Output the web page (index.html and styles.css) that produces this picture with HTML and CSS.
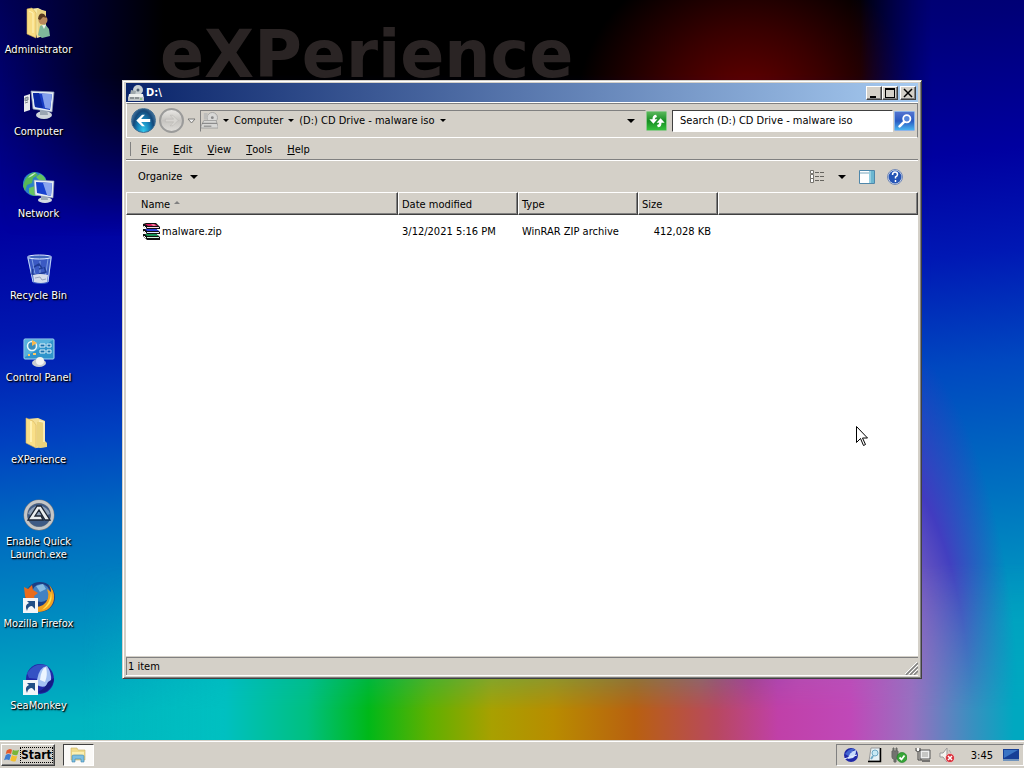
FILE: index.html
```html
<!DOCTYPE html>
<html lang="en">
<head>
<meta charset="utf-8">
<title>Desktop</title>
<link rel="stylesheet" href="styles.css">
</head>
<body>
<main class="desktop">
  <div class="wallpaper" aria-hidden="true">
    <div class="glow-top"></div>
    <div class="glow-right"></div>
    <div class="glow-violet"></div>
    <div class="glow-bottom"></div>
    <p class="watermark">eXPerience</p>
  </div>

  <nav class="shortcuts" aria-label="Desktop icons">
    <a class="shortcut" href="#admin">
      <svg viewBox="0 0 32 32"><path d="M6 2l9-1 8 4v23l-9 3z" fill="#f6e9a4"/><path d="M14 2l9 2v21l-8 5z" fill="#e9d384"/><path d="M15 28l2-9 5-2 4 5 1 7-8 2z" fill="#7eb89a"/><path d="M19 18l2 4 2-4z" fill="#edf2e8"/><circle cx="20" cy="13" r="4.500" fill="#b98a5c"/><path d="M15 12q1-7 6-5l3 4-4-1-3 3z" fill="#57391f"/><path d="M4 2l5-1 4 5v25L4 27z" fill="#f8dd83" stroke="#d0ad55" stroke-width=".6"/><path d="M6 4l4 2v20" fill="none" stroke="#fff3ba"/></svg>
      <span>Administrator</span></a>
    <a class="shortcut" href="#computer">
      <svg viewBox="0 0 32 32"><path d="M1 7l6-2v16l-6 2z" fill="#e8eaec"/><path d="M2 9l3-1v3l-3 1zm0 5l3-1" stroke="#7d858c" fill="#aab3ba"/><ellipse cx="21" cy="26" rx="8" ry="4" fill="#cfd5db"/><path d="M17 21h7l1 5h-8z" fill="#9aa5b2"/><path d="M8 2l23 1-2 20-19-3z" fill="#e6edf5" stroke="#8697ad" stroke-width=".7"/><path d="M10 4l19 1-2 16-15-3z" fill="#173bc2"/><path d="M19 5l10 0-2 15-5-1z" fill="#839fec"/><path d="M10 4l6 0 4 15-8-1z" fill="#0926a0"/></svg>
      <span>Computer</span></a>
    <a class="shortcut" href="#network">
      <svg viewBox="0 0 32 32"><circle cx="12" cy="13" r="12" fill="#2a82c9"/><path d="M2 9Q6 2 12 1l3 3-5 3-1 5-5 2-2 6-2-5z" fill="#57b856"/><path d="M17 3q5 2 6 7l-7-1-3-3zM6 17l6-2 4 5-2 5q-5 0-8-3z" fill="#65c461"/><path d="M5 7q4-5 8-5-3 3-8 5z" fill="#c7efd0"/><ellipse cx="22" cy="29" rx="7" ry="3" fill="#d5dce2"/><path d="M18 23h6l1 6h-7z" fill="#9dabb9"/><path d="M11 9l20 1-1 17-18-3z" fill="#e8eef5" stroke="#8799ac" stroke-width=".6"/><path d="M13 11l16 1-1 13-14-3z" fill="#1741cf"/><path d="M20 12l9 0-1 13-4-1z" fill="#89a5ef"/></svg>
      <span>Network</span></a>
    <a class="shortcut" href="#bin">
      <svg viewBox="0 0 32 32"><path d="M4 4h25l-4 26q-6 2-15 0z" fill="#4a6fcb" fill-opacity=".8"/><path d="M9 6l4 20M17 8v18M25 6l-3 20" stroke="#7f9fe4"/><path d="M5 5l5 24M28 5l-3 24" stroke="#c2d5fb"/><ellipse cx="16.500" cy="4" rx="12" ry="2" fill="#3f65bd" stroke="#e1ebff"/><path d="M11 14l5-3 3 4-3 1m-6 0l-1 5 5 1m2-1l7-2-2-5" fill="none" stroke="#203c96" stroke-width="1.500"/><path d="M10 22q7-2 15 0l-1 7q-6 2-13 0z" fill="#d5dcec"/><path d="M12 25l5-1 2 3 4-1" fill="none" stroke="#98a4bf"/></svg>
      <span>Recycle Bin</span></a>
    <a class="shortcut" href="#control">
      <svg viewBox="0 0 32 32"><rect x="1" y="4" width="30" height="20" rx="1" fill="#3194cb" stroke="#a6d9f4"/><path d="M2 5h28L2 22z" fill="#57b1dc"/><circle cx="9" cy="11" r="4.500" fill="#3a8fbc" stroke="#e9f5f8" stroke-width="1.500"/><path d="M9 11V5l5 3z" fill="#f8b84d"/><path d="M17 9h5v3h-5zm7 0h4v3h-4zm-7 6h5v3h-5zm7 0h4v3h-4z" fill="#196fad" stroke="#dcf3fb"/><path d="M5 20h2m3-1h3" stroke="#ffc760" stroke-width="2"/><ellipse cx="16" cy="28" rx="7" ry="4" fill="#cbced0"/><circle cx="17" cy="26" r="4" fill="#f4f4f2"/></svg>
      <span>Control Panel</span></a>
    <a class="shortcut" href="#experience">
      <svg viewBox="0 0 32 32"><path d="M4 2l11-1 7 3v26l-9 1z" fill="#f4df95"/><path d="M14 5l8-1v20l2 2v4l-7 1-3-2z" fill="#ead27c"/><path d="M3 1l7 3 3 4v23L3 26z" fill="#f9df88" stroke="#d6b45f" stroke-width=".6"/><path d="M8 4v21" stroke="#fff0af" stroke-width="2"/><path d="M16 4l5 1v20" fill="none" stroke="#fbf1c5" stroke-width="1.500"/></svg>
      <span>eXPerience</span></a>
    <a class="shortcut" href="#enable">
      <svg viewBox="0 0 32 32"><circle cx="16" cy="16" r="15.500" fill="#747a80"/><circle cx="16" cy="16" r="13.500" fill="none" stroke="#c4c6c8" stroke-width="3"/><circle cx="16" cy="16" r="11.500" fill="#3e5a85"/><path d="M5 15a11.500 11.500 0 0 1 22 0q-10 5-22 0z" fill="#8b9eb7"/><path d="M5 21L14 7h4l9 14h-5l-6-10-4 6h6l2 4z" fill="#e9edf0" stroke="#1c2533" stroke-width="1.300"/></svg>
      <span>Enable Quick Launch.exe</span></a>
    <a class="shortcut" href="#firefox">
      <svg viewBox="0 0 32 32"><circle cx="17" cy="16" r="15" fill="#1b3e84"/><circle cx="18" cy="12" r="9" fill="#4382c2"/><path d="M13 5l7-2 3 5-6 3z" fill="#87bbe1"/><path d="M25 3q7 6 6 15-2 12-15 13-8-1-12-7 9 4 16 0 8-6 4-16l4 3q0-5-3-8z" fill="#f2a11f"/><path d="M28 11q3 12-9 18 9-8 9-18z" fill="#ffe451"/><path d="M2 15L1 6l4 2 4-4 1 5 5 3-4 3 1 4H3z" fill="#e96c1c"/><path d="M0 17h15v15H0z" fill="#f3f5f8"/><path d="M4 30q-3-6 2-8L4 20h8v8l-3-3q-4 0-5 5z" fill="#214e86"/></svg>
      <span>Mozilla Firefox</span></a>
    <a class="shortcut" href="#seamonkey">
      <svg viewBox="0 0 32 32"><ellipse cx="17" cy="16" rx="14" ry="15" fill="#2028a8"/><path d="M4 10Q13-2 25 3q-9 2-10 13l-9-1z" fill="#3452c4"/><path d="M14 17Q16 4 24 3q5 7 4 15-6 9-14 4z" fill="#a3c1f3"/><path d="M17 17q1-11 6-13 2 8-1 15z" fill="#edf5ff"/><path d="M25 19l6-4q0 7-7 13-5 3-9 1 7-3 10-10z" fill="#141d84"/><path d="M0 17h15v15H0z" fill="#f3f5f8"/><path d="M4 30q-3-6 2-8L4 20h8v8l-3-3q-4 0-5 5z" fill="#214e86"/></svg>
      <span>SeaMonkey</span></a>
  </nav>

  <section class="window" aria-label="D:\">
    <header class="titlebar">
      <svg class="title-icon" viewBox="0 0 16 16"><circle cx="10" cy="5" r="5" fill="#c9d0d2"/><circle cx="10" cy="5" r="1.500" fill="#536170"/><path d="M3 5l5 1-1 4H2z" fill="#9fa8ac"/><path d="M1 9h14l1 5H0z" fill="#edf0ee"/><path d="M0 12h16v4H0z" fill="#bfc4c5"/><path d="M2 13h4m1 0h4" stroke="#555d61"/><path d="M12 14h2" stroke="#61bc52"/></svg>
      <h1>D:\</h1>
      <div class="caption-buttons">
        <button aria-label="Minimize"><svg viewBox="0 0 12 10"><path d="M2 8h6v2H2z"/></svg></button>
        <button aria-label="Maximize"><svg viewBox="0 0 12 10"><path d="M1 0h10v10H1zm1 2v7h8V2z" fill-rule="evenodd"/></svg></button>
        <button class="close" aria-label="Close"><svg viewBox="0 0 12 10"><path d="M2 1l8 8M10 1L2 9" stroke="#000" stroke-width="1.500"/></svg></button>
      </div>
    </header>

    <div class="navbar">
      <div class="travel">
        <button class="round back" aria-label="Back"><svg viewBox="0 0 24 24"><path d="M10.500 6l-6 6 6 6h3l-4-4.500H19v-3H9.500l4-4.500z" fill="#fff"/></svg></button>
        <button class="round forward" aria-label="Forward"><svg viewBox="0 0 24 24"><path d="M13.500 6l6 6-6 6h-3l4-4.500H5v-3h9.500l-4-4.500z" fill="#d7d5d1" stroke="#b9b7b3" stroke-width=".6"/></svg></button>
        <button class="recent" aria-label="Recent pages"><svg viewBox="0 0 9 6"><path d="M1 1h7L4.500 5z" fill="#eee" stroke="#7b7b78"/></svg></button>
      </div>
      <div class="address">
        <svg class="drive" viewBox="0 0 18 18"><circle cx="12" cy="6" r="5.500" fill="#d8d8d6" stroke="#a5a5a4"/><circle cx="12" cy="6" r="1.500" fill="#888"/><path d="M3 1h4v7H3z" fill="#bdbdbb"/><path d="M3 9h13l2 6v2H0v-2z" fill="#d7d7d5" stroke="#a3a3a1"/><path d="M1 12h16M3 15h8" stroke="#777"/></svg>
        <button class="crumb-arrow" aria-label="Locations"><i class="tri"></i></button>
        <a href="#computer">Computer</a>
        <button class="crumb-arrow" aria-label="Computer contents"><i class="tri"></i></button>
        <a href="#drive">(D:) CD Drive - malware iso</a>
        <button class="crumb-arrow" aria-label="Drive contents"><i class="tri"></i></button>
        <button class="history" aria-label="Previous locations"><i class="tri wide"></i></button>
      </div>
      <button class="tool refresh" aria-label="Refresh"><svg viewBox="0 0 20 20"><path d="M9 3Q5 3 5 8H1.500L6 13l4.500-5H7.500q0-2 2.500-2.500zM11 17q4 0 4-5h3.500L14 7l-4.500 5h3q0 2-2.500 2.500z" fill="#fff"/></svg></button>
      <input class="search" type="search" aria-label="Search" placeholder="Search (D:) CD Drive - malware iso">
      <button class="tool find" aria-label="Find"><svg viewBox="0 0 20 20"><circle cx="12" cy="7.500" r="4" fill="#5687dc" stroke="#fff" stroke-width="2"/><path d="M9 11l-5 5" stroke="#fff" stroke-width="3" stroke-linecap="round"/></svg></button>
    </div>

    <nav class="menubar" aria-label="Menu">
      <button><u>F</u>ile</button><button><u>E</u>dit</button><button><u>V</u>iew</button><button><u>T</u>ools</button><button><u>H</u>elp</button>
    </nav>

    <div class="commandbar">
      <button class="organize">Organize <i class="tri wide"></i></button>
      <button class="view-mode" aria-label="Views"><svg viewBox="0 0 16 13"><path d="M1.500.500h3v3h-3zm0 4h3v4h-3zm0 4h3v4h-3z" fill="#fff" stroke="#77756f"/><path d="M6 2.500h4m1 0h4M6 6.500h4m1 0h4M6 10.500h4m1 0h4" stroke="#66645f"/></svg></button>
      <button class="view-more" aria-label="More views"><i class="tri wide"></i></button>
      <button class="pane" aria-label="Preview pane"><svg viewBox="0 0 16 14"><path d="M.5.500h15v13H.500z" fill="#fff" stroke="#4f87aa"/><path d="M1 3h9" stroke="#76a5bd"/><path d="M10 1h5v12h-5z" fill="#6bb6d0"/><path d="M11 1v12" stroke="#c4e8f1"/></svg></button>
      <button class="help" aria-label="Help"><svg viewBox="0 0 16 16"><circle cx="8" cy="8" r="7.500" fill="#dce3f2" stroke="#7389b5"/><circle cx="8" cy="8" r="6.500" fill="#2554b5"/><path d="M5.500 6q0-3 2.500-3t2.500 2.500Q10.500 7 8.500 8v1.500M8.500 11v2" fill="none" stroke="#fff" stroke-width="1.500"/></svg></button>
    </div>

    <div class="files">
      <table>
        <colgroup><col class="c-name"><col class="c-date"><col class="c-type"><col class="c-size"><col></colgroup>
        <thead><tr><th>Name <i class="sort"></i></th><th>Date modified</th><th>Type</th><th>Size</th><td></td></tr></thead>
        <tbody><tr>
          <td><a class="file" href="#malware"><svg viewBox="0 0 17 17"><path d="M0 1l3-1h10l4 4v2H4L0 3z" fill="#111"/><path d="M2 1h10l3 2H5z" fill="#d0185c"/><path d="M4 4h12v1H4z" fill="#ffd9e4"/><path d="M0 6h13l4 3v2H4L0 8z" fill="#111"/><path d="M2 6h11l3 2H4z" fill="#263fd8"/><path d="M4 9h12v1H4z" fill="#e0e9ff"/><path d="M0 11h13l4 3v3H4l-4-4z" fill="#111"/><path d="M2 11h11l3 2H4z" fill="#149352"/><path d="M4 14h12v1H4z" fill="#d3f5e0"/><path d="M1 3l2 2M1 8l2 2M1 13l2 2" stroke="#fff"/><path d="M8 1h3l2 2h-3z" fill="#ef7c95"/></svg>malware.zip</a></td>
          <td>3/12/2021 5:16 PM</td><td>WinRAR ZIP archive</td><td class="num">412,028 KB</td><td></td>
        </tr></tbody>
      </table>
    </div>

    <footer class="status"><span>1 item</span>
      <svg class="grip" viewBox="0 0 13 13"><path d="M1 13L13 1M5 13l8-8M9 13l4-4" stroke="#808080" stroke-width="1.500"/><path d="M0 12L12 0M4 12l9-9M8 12l5-5" stroke="#fff"/></svg>
    </footer>
  </section>

  <svg class="cursor" viewBox="0 0 12 20" aria-hidden="true"><path d="M.5.500v16l4-4 3 7 2-1-3-6.500h5z" fill="#fff" stroke="#000"/></svg>
</main>

<footer class="taskbar">
  <button class="start"><svg viewBox="0 0 18 16"><path d="M3 3q3-3 6-1L8 7Q5 5 2 7z" fill="#e45a2b"/><path d="M10 2q3 2 7 0l-2 6q-3 1-6-1z" fill="#78b53a"/><path d="M2 8q3-2 6 0l-2 6q-3-2-6 0z" fill="#3e7dcf"/><path d="M9 8q3 2 6 1l-2 6q-3 1-6-1z" fill="#f3bf2e"/></svg><span>Start</span></button>
  <button class="task" aria-label="Windows Explorer"><svg viewBox="0 0 18 16"><path d="M2 1h6l1 2h7v10H2z" fill="#f0dc8c" stroke="#c9b162" stroke-width=".6"/><path d="M3 5h12v6H3z" fill="#fbf0b2"/><path d="M3 15V9q0-1 2-1h8q2 0 2 1v6h-3v-3H6v3z" fill="#7cbfe2" stroke="#3d84ad" stroke-width=".6"/></svg></button>
  <div class="tray">
    <svg viewBox="0 0 16 16"><circle cx="8" cy="8" r="7" fill="#2029a8"/><path d="M2 7q4-6 10-5-5 3-5 8z" fill="#4264d1"/><path d="M5 12Q6 5 13 3q0 6-3 8z" fill="#c8dcfc"/><path d="M1 12l13-4" stroke="#e8efff"/></svg>
    <svg viewBox="0 0 16 16"><path d="M4 1h9v13H2z" fill="#e6f1f6" stroke="#999"/><path d="M13.500 1v13.500H1" stroke="#000" stroke-width="1.500" fill="none"/><circle cx="8" cy="6" r="3" fill="#c8e9f5" stroke="#6fa9c6"/><path d="M6 9l-2 3" stroke="#6fa9c6" stroke-width="2"/></svg>
    <svg viewBox="0 0 16 16"><path d="M2 1h1v3h2V1h1v3h1v6q0 2-2 2v3H3v-3q-2 0-2-2V4h1z" fill="#72736f" stroke="#656663"/><circle cx="11" cy="10.500" r="5" fill="#36a537" stroke="#177a22" stroke-width=".6"/><path d="M8.500 10.500l2 2 3-4" fill="none" stroke="#fff" stroke-width="1.800"/></svg>
    <svg viewBox="0 0 16 16"><path d="M5 3h10v9H5z" fill="#eee" stroke="#555"/><path d="M7 5h6v5H7z" fill="#c6c6c4"/><path d="M7 14h8" stroke="#555" stroke-width="1.500"/><path d="M1 1v3h4V1M3 4v9h4" fill="none" stroke="#444"/><path d="M2 1h2v3H2z" fill="#fff"/></svg>
    <svg viewBox="0 0 16 16"><path d="M1 6h3l4-5v14l-4-5H1z" fill="#f5f3ef" stroke="#999"/><path d="M10 3q2 2 2 5" fill="none" stroke="#aaa"/><circle cx="11" cy="11" r="4.500" fill="#d9303a" stroke="#fff" stroke-width=".5"/><path d="M9 9l4 4m0-4l-4 4" stroke="#fff" stroke-width="1.500"/></svg>
    <time>3:45</time>
    <button class="show-desktop" aria-label="Show desktop"><svg viewBox="0 0 16 16"><path d="M0 2h16v11H0z" fill="#163f96"/><path d="M1 3h14L1 11z" fill="#3974c4"/><path d="M0 12h16v2H0z" fill="#7194bd"/></svg></button>
  </div>
</footer>
</body>
</html>
```
FILE: styles.css
```css
:root {
  --face: #d4d0c8;
  --shade: #808080;
  --dark: #404040;
}

* { box-sizing: border-box; }

body {
  margin: 0;
  height: 100vh;
  display: flex;
  flex-direction: column;
  overflow: hidden;
  color: #000;
  font: 11px/13px "DejaVu Sans Condensed", "Noto Sans", sans-serif;
}

button {
  display: flex;
  align-items: center;
  justify-content: center;
  margin: 0;
  padding: 0;
  border: 0;
  background: none;
  color: inherit;
  font: inherit;
}

a { color: inherit; text-decoration: none; }
svg { display: block; flex: none; }

/* Desktop and wallpaper */
.desktop { position: relative; flex: 1; min-height: 0; }

.wallpaper {
  position: absolute;
  inset: 0;
  overflow: hidden;
  background: linear-gradient(174deg, #000058 0%, #000078 14%, #0000a0 27%, #0018b0 40%, #0040c0 52%, #0068c0 62%, #0090c0 75%, #00b4c0 86%, #00bcc0 100%);
}

.glow-top, .glow-right, .glow-violet, .glow-bottom { position: absolute; inset: 0; }

.glow-top {
  background:
    radial-gradient(ellipse 170px 150px at 73% 14%, #680000 0%, #380000 50%, transparent 100%),
    linear-gradient(90deg, transparent 0%, #000028 9%, #000 16%, #000 83%, #000048 93%, #000060 100%);
  -webkit-mask-image: linear-gradient(#000 10%, transparent 32%);
  mask-image: linear-gradient(#000 10%, transparent 32%);
}

.glow-right {
  background: linear-gradient(174deg, #000060 0%, #000078 14%, #0000a0 30%, #0018b4 42%, #0048c0 55%, #0070c0 70%, #00a0c0 86%, #00a8c0 100%);
  -webkit-mask-image: linear-gradient(90deg, transparent 84%, #000 91%);
  mask-image: linear-gradient(90deg, transparent 84%, #000 91%);
}

.glow-violet {
  background: radial-gradient(ellipse 160px 420px at 84% 100%, #b060b8 0%, #9068c0 40%, rgb(88 40 192 / 75%) 70%, transparent 100%);
}

.glow-bottom {
  background: linear-gradient(90deg, transparent 8%, #00c0c0 22%, #00c080 30%, #00b818 36%, #60b000 42%, #a8a000 48%, #b88c00 54%, #b86010 62%, #b84860 70%, #c040a8 76%, #c048b8 83%, #9870c0 89%, #3890c0 95%, #00a8c0 99%);
  -webkit-mask-image: linear-gradient(transparent 76%, #000 96%);
  mask-image: linear-gradient(transparent 76%, #000 96%);
}

.watermark {
  position: absolute;
  left: 160px;
  top: 18px;
  margin: 0;
  color: #2a2424;
  font: bold 65px/74px "DejaVu Sans", sans-serif;
}

.shortcuts {
  position: relative;
  display: grid;
  grid-auto-rows: 82px;
  width: 77px;
  padding-top: 7px;
}

.shortcut {
  display: flex;
  flex-direction: column;
  align-items: center;
  gap: 4px;
  color: #fff;
  text-align: center;
  text-shadow: 1px 1px 2px #000, 1px 1px 1px #000;
}

.shortcut svg { width: 32px; height: 32px; }
.shortcut span { width: 76px; }

/* Explorer window */
.window {
  position: absolute;
  inset: 80px 102px 61px 122px;
  display: flex;
  flex-direction: column;
  padding: 2px;
  background: var(--face);
  border: 1px solid;
  border-color: var(--face) var(--dark) var(--dark) var(--face);
  box-shadow: inset 1px 1px #fff, inset -1px -1px var(--shade);
}

.titlebar {
  display: flex;
  align-items: center;
  gap: 2px;
  height: 20px;
  margin: 0 1px;
  padding: 0 2px;
  color: #fff;
  background: linear-gradient(90deg, #0a246a, #a6caf0);
  border-bottom: 1px solid #fff;
}

.title-icon { width: 16px; height: 16px; }
.titlebar h1 { flex: 1; margin: 0; font: bold 11px/13px "DejaVu Sans Condensed", sans-serif; }
.caption-buttons { display: flex; }

.caption-buttons button {
  width: 16px;
  height: 14px;
  background: var(--face);
  border: 1px solid;
  border-color: #fff var(--dark) var(--dark) #fff;
  box-shadow: inset -1px -1px var(--shade);
}

.caption-buttons svg { width: 12px; height: 10px; }
.caption-buttons .close { margin-left: 2px; }

.navbar {
  display: flex;
  align-items: center;
  height: 35px;
  margin: 0 1px;
  padding: 0 2px 0 4px;
  border: 1px solid;
  border-color: var(--shade) var(--shade) #fff #fff;
}

.travel { display: flex; align-items: center; gap: 3px; }
.round { width: 25px; height: 25px; border-radius: 50%; }

.back {
  border: 1px solid #3d6c92;
  background: radial-gradient(ellipse at 50% 100%, #35cdf0 0, #1580b8 40%, #154879 65%, #6c9cc0 100%);
}

.forward {
  border: 2px solid #9b9b9a;
  background: linear-gradient(#e9e7e4, #c6c4c0 50%, #dedcd8);
}

.recent svg { width: 9px; height: 6px; }

.address {
  flex: 1;
  display: flex;
  align-items: center;
  height: 22px;
  margin-left: 4px;
  border: 1px solid;
  border-color: var(--shade) var(--face) var(--face) var(--shade);
}

.drive { width: 17px; height: 17px; }
.crumb-arrow { width: 16px; height: 18px; }
.history { width: 20px; height: 18px; margin-left: auto; margin-right: 4px; }

.tri {
  width: 0;
  height: 0;
  border: 3px solid transparent;
  border-top-color: #000;
  border-bottom: 0;
}

.tri.wide { border-width: 4px 4px 0; }

.tool { width: 21px; height: 20px; border: 1px solid; border-radius: 1px; }
.tool svg { width: 18px; height: 18px; }
.refresh { border-color: #8cc88c; background: linear-gradient(#59b75a, #168d22 50%, #37c13c); }
.find { border-color: #8cb4e8; background: linear-gradient(#5273cf, #285ac2 50%, #49b4ef); }

.search {
  width: 221px;
  height: 22px;
  margin: 0 1px 0 5px;
  padding: 0 7px;
  border: 1px solid;
  border-color: var(--dark) #fff #fff var(--dark);
  border-radius: 0;
  outline: 0;
  background: #fff;
  font: inherit;
  appearance: none;
}

.search::placeholder { color: #000; opacity: 1; }

.menubar {
  display: flex;
  gap: 15px;
  height: 23px;
  margin: 0 1px;
  padding-left: 15px;
  border-bottom: 1px solid #fff;
  box-shadow: inset 0 -1px var(--shade);
  background: linear-gradient(var(--shade), var(--shade)) 4px 4px / 1px 14px no-repeat;
}

.commandbar {
  display: flex;
  align-items: center;
  height: 31px;
  padding: 0 16px 0 13px;
}

.organize { gap: 8px; margin-right: auto; }
.view-mode svg { width: 16px; height: 13px; }
.view-more { width: 34px; height: 20px; }
.pane svg { width: 16px; height: 14px; }
.help { margin-left: 12px; }
.help svg { width: 16px; height: 16px; }

.files { flex: 1; min-height: 0; margin: 0 1px; background: #fff; }

table { width: 100%; border-collapse: separate; border-spacing: 0; table-layout: fixed; }
.c-name { width: 272px; }
.c-date, .c-type { width: 120px; }
.c-size { width: 80px; }

thead th, thead td {
  height: 23px;
  padding: 1px 4px 0;
  background: var(--face);
  border: 1px solid;
  border-color: #fff var(--dark) var(--dark) #fff;
  box-shadow: inset -1px -1px var(--shade);
  text-align: left;
  font-weight: normal;
}

thead th { padding-left: 3px; }
thead th:first-child { padding-left: 14px; }

.sort {
  display: inline-block;
  margin-left: 1px;
  border: 3px solid transparent;
  border-top: 0;
  border-bottom-color: var(--shade);
  vertical-align: 4px;
}

tbody td { padding: 8px 4px 0; white-space: nowrap; }
tbody td:first-child { padding-left: 17px; }
tbody .num { padding-right: 7px; text-align: right; }
.file { display: flex; align-items: center; gap: 2px; }
.file svg { width: 17px; height: 17px; }

.status {
  display: flex;
  align-items: center;
  height: 20px;
  margin: 0 1px;
  padding: 1px 0 0 2px;
  border-top: 1px solid var(--face);
  border-bottom: 1px solid #fff;
  box-shadow: inset 1px 1px var(--shade);
}

.status span { flex: 1; }
.grip { width: 13px; height: 13px; align-self: flex-end; }

.cursor { position: absolute; left: 856px; top: 426px; width: 12px; height: 20px; }

/* Taskbar */
.taskbar {
  display: flex;
  align-items: center;
  height: 28px;
  padding: 1px 0 0 1px;
  background: var(--face);
  border-top: 1px solid var(--face);
  box-shadow: inset 0 1px #fff;
}

.start {
  gap: 1px;
  height: 22px;
  padding: 0 2px;
  border: 1px solid;
  border-color: #fff var(--dark) var(--dark) #fff;
  box-shadow: inset -1px -1px var(--shade);
  font: bold 12px/14px "DejaVu Sans Condensed", sans-serif;
}

.start svg { width: 16px; height: 16px; }
.start span { outline: 1px dotted #000; }

.task {
  width: 31px;
  height: 22px;
  margin-left: 8px;
  border: 1px solid;
  border-color: var(--dark) #fff #fff var(--dark);
  background: #fbfaf8;
}

.task svg { width: 18px; height: 16px; }

.tray {
  display: flex;
  align-items: center;
  gap: 8px;
  height: 22px;
  margin-left: auto;
  padding: 0 4px 0 6px;
  border: 1px solid;
  border-color: var(--shade) #fff #fff var(--shade);
}

.tray svg { width: 16px; height: 16px; }
.tray time { margin: 0 2px 0 8px; }
```
